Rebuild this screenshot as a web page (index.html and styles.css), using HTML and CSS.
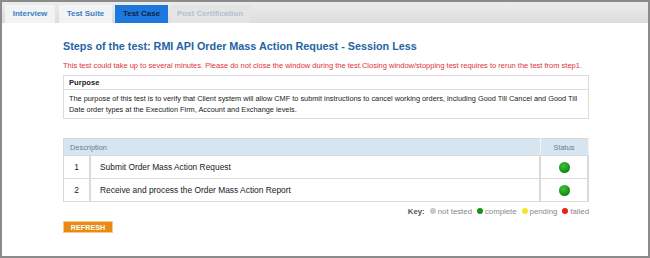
FILE: index.html
```html
<html>

<head>
    <link rel="stylesheet" href="styles.css">
</head>

<body>
    <div id="frame">
        <div id="tabBar">
            <a class="tab">Interview</a>
            <a class="tab">Test Suite</a>
            <a class="tab active">Test Case</a>
            <a class="tab disabled">Post Certification</a>
        </div>
        <div id="content">
            <h2 class="title">Steps of the test: RMI API Order Mass Action Request - Session Less</h2>
            <p class="warn">This test could take up to several minutes. Please do not close the window during the test.Closing window/stopping test requires to rerun the test from step1.</p>
            <div class="purpose">
                <div class="purpose-head">Purpose</div>
                <div class="purpose-body">The purpose of this test is to verify that Client system will allow CMF to submit instructions to cancel working orders, including Good Till Cancel and Good Till Date order types at the Execution Firm, Account and Exchange levels.</div>
            </div>
            <table class="steps">
                <tr>
                    <th colspan="2" class="desc">Description</th>
                    <th class="status">Status</th>
                </tr>
                <tr>
                    <td class="num">1</td>
                    <td>Submit Order Mass Action Request</td>
                    <td class="status"><span class="dot green"></span></td>
                </tr>
                <tr>
                    <td class="num">2</td>
                    <td>Receive and process the Order Mass Action Report</td>
                    <td class="status"><span class="dot green"></span></td>
                </tr>
            </table>
            <div class="key">
                <b>Key:</b>
                <span class="k"><span class="kdot grey"></span>not tested</span>
                <span class="k"><span class="kdot green"></span>complete</span>
                <span class="k"><span class="kdot yellow"></span>pending</span>
                <span class="k"><span class="kdot red"></span>failed</span>
            </div>
            <a class="refresh">REFRESH</a>
        </div>
    </div>
</body>

</html>
```

FILE: styles.css
```css
body {
    margin: 0;
    font-family: 'Liberation Sans', Arial, sans-serif;
    color: #333;
}

#frame {
    width: 650px;
    height: 258px;
    box-sizing: border-box;
    border: 2px solid #8a8a8a;
    background: #fff;
    overflow: hidden;
}

#tabBar {
    height: 21px;
    background: linear-gradient(#ececec, #dcdcdc);
    display: flex;
    align-items: flex-end;
    padding-left: 3px;
    gap: 4px;
}

.tab {
    height: 18px;
    line-height: 18px;
    font-size: 8px;
    font-weight: bold;
    color: #3d7cc4;
    background: #f1f3f5;
    text-align: center;
    white-space: nowrap;
}

.tab:nth-child(1) {
    width: 50px;
}

.tab:nth-child(2) {
    width: 53px;
}

.tab.active {
    background: #1d78de;
    color: #14233f;
    width: 53px;
    margin-left: -1px;
}

.tab.disabled {
    background: #e4e4e4;
    color: #b3c0cf;
    margin-left: -2px;
    width: 80px;
}

#content {
    padding-left: 61px;
    width: 526px;
}

.title {
    margin: 16px 0 0;
    font-size: 10.8px;
    line-height: 15px;
    color: #2563a4;
}

.warn {
    margin: 7px 0 0;
    font-size: 7.5px;
    line-height: 10px;
    color: #e0313a;
    white-space: nowrap;
}

.purpose {
    margin-top: 4px;
    border: 1px solid #dcdcdc;
    height: 42px;
}

.purpose-head {
    font-size: 7.6px;
    font-weight: bold;
    color: #222;
    height: 13px;
    line-height: 13px;
    padding-left: 5px;
    border-bottom: 1px solid #dcdcdc;
}

.purpose-body {
    font-size: 7.35px;
    line-height: 11px;
    color: #222;
    padding: 3px 5px 0;
}

.steps {
    margin-top: 19px;
    width: 526px;
    border-collapse: collapse;
    border: 1px solid #d8d8d8;
    font-size: 8.4px;
    color: #222;
}

.steps th {
    background: #d6e5f0;
    color: #6c7b8a;
    font-weight: normal;
    font-size: 7.4px;
    height: 17px;
    padding: 0;
    border-right: 1px solid #f4f4f4;
}

.steps th.desc {
    text-align: left;
    padding-left: 6px;
}

.steps td {
    height: 23px;
    padding: 0 0 0 9px;
    border: 1px solid #dadada;
    border-width: 1px 2px 1px 0;
}

.steps td.num {
    width: 25px;
    padding: 0;
    text-align: center;
}

.steps .status {
    width: 46px;
    padding: 0;
    text-align: center;
}

.dot {
    display: inline-block;
    width: 11px;
    height: 11px;
    border-radius: 50%;
    vertical-align: middle;
}

.dot.green {
    background: radial-gradient(circle at 40% 35%, #3cc43c, #118a11 70%, #0a6a0a);
}

.key {
    display: flex;
    justify-content: flex-end;
    align-items: center;
    gap: 5px;
    margin-top: 4px;
    font-size: 7.8px;
    color: #888;
    height: 10px;
}

.key b {
    color: #555;
}

.k {
    display: flex;
    align-items: center;
    gap: 2px;
    color: #888;
}

.kdot {
    display: inline-block;
    width: 6px;
    height: 6px;
    border-radius: 50%;
}

.kdot.grey {
    background: #c8c8c8;
}

.kdot.green {
    background: #139413;
}

.kdot.yellow {
    background: #f2e82a;
}

.kdot.red {
    background: #e82020;
}

.refresh {
    display: block;
    margin-top: 5px;
    width: 50px;
    height: 12px;
    line-height: 12px;
    text-align: center;
    background: #e98b12;
    border: 1px solid #f6c98a;
    box-sizing: border-box;
    color: #fff;
    font-size: 7.2px;
    font-weight: bold;
}
```
